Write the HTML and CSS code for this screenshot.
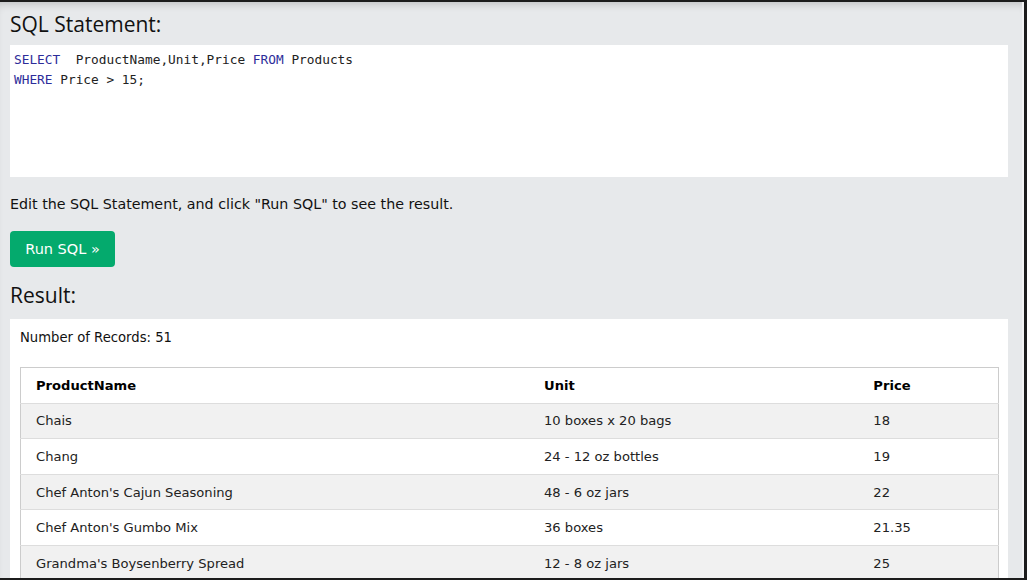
FILE: index.html
```html
<!DOCTYPE html>
<html>
<head>
<meta charset="utf-8">
<link rel="stylesheet" href="styles.css">
</head>
<body>
<div class="frame">
  <div class="page">
    <h2 class="heading first">SQL Statement:</h2>
    <div class="codebox"><div class="line"><span class="kw">SELECT</span>&nbsp; ProductName,Unit,Price <span class="kw">FROM</span> Products</div><div class="line"><span class="kw">WHERE</span> Price &gt; 15;</div></div>
    <p class="hint">Edit the SQL Statement, and click "Run SQL" to see the result.</p>
    <button class="run">Run SQL »</button>
    <h2 class="heading">Result:</h2>
    <div class="result">
      <div class="count">Number of Records: 51</div>
      <table class="grid">
        <colgroup><col class="c1"><col class="c2"><col class="c3"></colgroup>
        <tr><th>ProductName</th><th>Unit</th><th>Price</th></tr>
        <tr><td>Chais</td><td>10 boxes x 20 bags</td><td>18</td></tr>
        <tr><td>Chang</td><td>24 - 12 oz bottles</td><td>19</td></tr>
        <tr><td>Chef Anton's Cajun Seasoning</td><td>48 - 6 oz jars</td><td>22</td></tr>
        <tr><td>Chef Anton's Gumbo Mix</td><td>36 boxes</td><td>21.35</td></tr>
        <tr><td>Grandma's Boysenberry Spread</td><td>12 - 8 oz jars</td><td>25</td></tr>
      </table>
    </div>
  </div>
</div>
</body>
</html>
```
FILE: styles.css
```css
html, body {
  margin: 0;
  padding: 0;
}
body {
  width: 1027px;
  height: 580px;
  overflow: hidden;
  font-family: "DejaVu Sans", Verdana, sans-serif;
}
.frame {
  box-sizing: border-box;
  width: 1027px;
  height: 580px;
  border-top: 2px solid #1c1c1c;
  border-right: 3px solid #1c1c1c;
  border-bottom: 2px solid #1c1c1c;
  background: #e7e9eb;
  overflow: hidden;
  box-shadow: inset 0 7px 8px -5px rgba(0,0,0,0.18);
}
.page {
  box-sizing: border-box;
  height: 100%;
  width: 1024px;
  padding: 0 14px 0 10px;
  border-right: 2px solid #f2f2f3;
}
.heading {
  margin: 0;
  font-family: "Open Sans", "Noto Sans", sans-serif;
  font-weight: 400;
  font-size: 21px;
  line-height: 30px;
  color: #111;
}
.heading.first {
  padding-top: 7px;
  margin-bottom: 6px;
}
.codebox {
  background: #fff;
  height: 132px;
  box-sizing: border-box;
  padding: 5px 4px;
  font-family: "DejaVu Sans Mono", "Liberation Mono", monospace;
  font-size: 12.8px;
  line-height: 20px;
  color: #222;
}
.kw {
  color: #2d2d9a;
}
.hint {
  margin: 17px 0 0;
  font-size: 14.25px;
  line-height: 20px;
  color: #111;
}
.run {
  display: block;
  margin-top: 17px;
  width: 105px;
  height: 36px;
  border: none;
  border-radius: 4px;
  background: #04aa6d;
  color: #fff;
  font-family: "DejaVu Sans", Verdana, sans-serif;
  font-size: 14.5px;
  padding: 0;
  margin-bottom: 13px;
}
.heading + .result {
  margin-top: 9px;
}
.result {
  background: #fff;
  padding: 9px 10px 20px 10px;
  height: 300px;
}
.count {
  font-size: 13.2px;
  line-height: 20px;
  color: #111;
}
.grid {
  margin-top: 19px;
  width: 979px;
  border-collapse: collapse;
  border: 1px solid #cccccc;
  font-size: 13.1px;
  color: #222;
}
.c1 { width: 508px; }
.c2 { width: 329px; }
.c3 { width: 140px; }
.grid th, .grid td {
  text-align: left;
  padding: 0 15px;
  height: 34.6px;
  border-bottom: 1px solid #dddddd;
}
.grid th {
  font-weight: bold;
  color: #000;
  background: #fff;
}
.grid tr:nth-child(even) td {
  background: #f1f1f1;
}
```
